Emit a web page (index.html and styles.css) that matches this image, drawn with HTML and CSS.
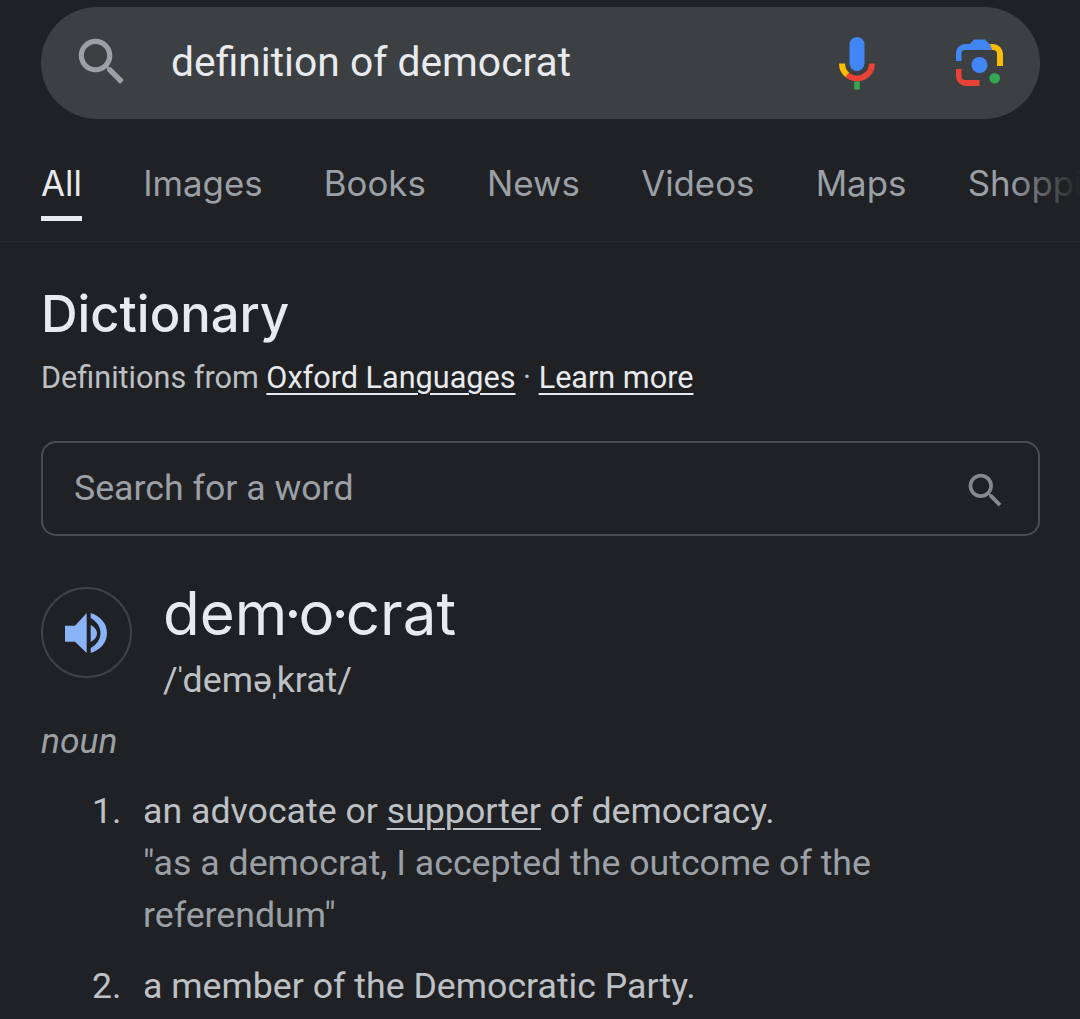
FILE: index.html
```html
<!DOCTYPE html>
<html lang="en">
<head>
  <meta charset="UTF-8">
  <title>definition of democrat</title>
  <link rel="stylesheet" href="styles.css">
</head>
<body>
  <div class="search-bar">
    <svg class="search-icon" viewBox="0 0 24 24"><path d="M15.5 14h-.79l-.28-.27A6.47 6.47 0 0 0 16 9.5 6.5 6.5 0 1 0 9.5 16c1.61 0 3.09-.59 4.23-1.57l.27.28v.79l5 4.99L20.49 19l-4.99-5zm-6 0C7.01 14 5 11.99 5 9.5S7.01 5 9.5 5 14 7.01 14 9.5 11.99 14 9.5 14z"/></svg>
    <span class="query">definition of democrat</span>
    <svg class="mic-icon" viewBox="0 0 38 53">
      <rect x="11.500" y="0" width="15" height="34" rx="7.500" fill="#4285f4"/>
      <path d="M4 26.500a15 15 0 0 0 5.360 11.500" fill="none" stroke="#fbbc04" stroke-width="6"/>
      <path d="M9.360 38A15 15 0 0 0 34 26.500" fill="none" stroke="#ea4335" stroke-width="6"/>
      <rect x="16.200" y="44.500" width="5.600" height="8" fill="#34a853"/>
    </svg>
    <svg class="lens-icon" viewBox="0 0 48 48">
      <path d="M0 22V14a9 9 0 0 1 9-9h5L18 .5h11l5 5L36 11H9a3.500 3.500 0 0 0-3.500 3.500V22z" fill="#4285f4"/>
      <path d="M34 5h3a10 10 0 0 1 10 10v12h-6V15a4 4 0 0 0-4-4h-1z" fill="#fbbc04"/>
      <path d="M0 30h5.500v7a4 4 0 0 0 4 4h14v6H10a10 10 0 0 1-10-10z" fill="#ea4335"/>
      <circle cx="23.500" cy="26" r="8" fill="#4285f4"/>
      <circle cx="38.700" cy="39.300" r="5.300" fill="#34a853"/>
    </svg>
  </div>

  <div class="tabs">
    <div class="tab active">All</div>
    <div class="tab">Images</div>
    <div class="tab">Books</div>
    <div class="tab">News</div>
    <div class="tab">Videos</div>
    <div class="tab">Maps</div>
    <div class="tab">Shopping</div>
    <div class="tabs-fade"></div>
  </div>

  <div class="dictionary">
    <h2>Dictionary</h2>
    <p class="source">Definitions from <a href="#">Oxford Languages</a> · <a href="#">Learn more</a></p>

    <div class="word-search">
      <span>Search for a word</span>
      <svg viewBox="0 0 24 24"><path d="M15.5 14h-.79l-.28-.27A6.47 6.47 0 0 0 16 9.5 6.5 6.5 0 1 0 9.5 16c1.61 0 3.09-.59 4.23-1.57l.27.28v.79l5 4.99L20.49 19l-4.99-5zm-6 0C7.01 14 5 11.99 5 9.5S7.01 5 9.5 5 14 7.01 14 9.5 11.99 14 9.5 14z"/></svg>
    </div>

    <div class="headword">
      <div class="speaker">
        <svg viewBox="0 0 42 40">
          <path d="M0 12.700H10L21.700 0V40L10 28.700H0z" fill="#8ab4f8"/>
          <path d="M25.700 12Q32 15.500 32 20.500T25.700 29z" fill="#8ab4f8"/>
          <path d="M25.700 0C35 3 42 10 42 20S35 37 25.700 40V35C31 32 35.500 27 35.500 20S31 8 25.700 5z" fill="#8ab4f8"/>
        </svg>
      </div>
      <div class="word">
        <div class="term">de<span class="tight">m·o·</span>crat</div>
        <div class="phonetic"><span class="tight">/ˈ</span>dem<span class="tight">əˌ</span>krat/</div>
      </div>
    </div>

    <div class="pos">noun</div>

    <ol class="senses">
      <li>
        <div>
          an advocate or <a href="#">supporter</a> of democracy.
          <div class="example">"as a democrat, I accepted the outcome of the referendum"</div>
        </div>
      </li>
      <li><div>a member of the Democratic Party.</div></li>
    </ol>
  </div>
</body>
</html>
```

FILE: styles.css
```css
html, body {
  height: 100%;
}

body {
  margin: 0;
  background: #202124;
  color: #e8eaed;
  font-family: Roboto, Arial, sans-serif;
  overflow: hidden;
}

a {
  color: #e8eaed;
  text-decoration: underline;
  text-decoration-thickness: 2px;
  text-underline-offset: 5px;
}

/* Search bar */
.search-bar {
  display: flex;
  align-items: center;
  height: 112px;
  margin: 7px 40px 0 41px;
  padding: 0 36px 0 30px;
  background: #3c4043;
  border-radius: 56px;
}

.search-icon {
  width: 62px;
  height: 62px;
  fill: #9aa0a6;
  flex: none;
  margin-right: 38px;
  transform: translateY(-1px);
}

.query {
  flex: 1;
  font-size: 40.8px;
  margin-top: -2px;
  color: #e8eaed;
}

.mic-icon {
  width: 38px;
  height: 53px;
  flex: none;
  margin-right: 80px;
}

.lens-icon {
  width: 48px;
  height: 48px;
  flex: none;
}

/* Tabs */
.tabs {
  position: relative;
  display: flex;
  gap: 61.3px;
  height: 123px;
  padding: 0 0 0 41px;
  box-sizing: border-box;
  border-bottom: 1px solid #27282b;
  overflow: hidden;
}

.tab {
  padding-top: 41px;
  font-family: Inter, Roboto, sans-serif;
  font-size: 34.8px;
  line-height: 46px;
  color: #9aa0a6;
  white-space: nowrap;
  flex: none;
}

.tab.active {
  color: #e8eaed;
  height: 56px;
  border-bottom: 5px solid #e8eaed;
}

.tabs-fade {
  position: absolute;
  top: 0;
  right: 0;
  bottom: 0;
  width: 70px;
  background: linear-gradient(to right, rgba(32, 33, 36, 0), #202124);
}

/* Dictionary block */
.dictionary {
  padding: 0 40px 0 41px;
}

.dictionary h2 {
  margin: 42px 0 0;
  font-family: Inter, Roboto, sans-serif;
  font-size: 50.7px;
  line-height: 60px;
  font-weight: 500;
}

.source {
  margin: 14px 0 0;
  font-size: 30.6px;
  line-height: 40px;
  color: #bdc1c6;
}

.word-search {
  display: flex;
  align-items: center;
  justify-content: space-between;
  height: 91px;
  margin-top: 43px;
  padding: 0 30px 0 31px;
  border: 2px solid #4a4d51;
  border-radius: 15px;
  font-size: 35.7px;
  color: #9aa0a6;
}

.word-search span {
  margin-top: -2px;
}

.word-search svg {
  width: 45px;
  height: 45px;
  fill: #85888c;
  transform: translateY(2px);
}

.headword {
  display: flex;
  margin-top: 51px;
}

.speaker {
  display: flex;
  align-items: center;
  justify-content: center;
  width: 87px;
  height: 87px;
  margin-right: 31px;
  border: 2px solid #3f4144;
  border-radius: 50%;
  flex: none;
}

.speaker svg {
  width: 42px;
  height: 40px;
  margin: 1px 0 0 -2px;
}

.term {
  margin-top: -9px;
  font-family: Inter, Roboto, sans-serif;
  font-size: 60px;
  line-height: 70px;
  color: #e8eaed;
}

.term .tight {
  letter-spacing: -3px;
}

.phonetic {
  margin-top: 10px;
  font-size: 35.7px;
  line-height: 44px;
  color: #bdc1c6;
}

.phonetic .tight {
  letter-spacing: -3.5px;
}

.pos {
  margin-top: 17px;
  font-size: 35.4px;
  line-height: 44px;
  font-style: italic;
  color: #9aa0a6;
}

.senses {
  counter-reset: sense;
  list-style: none;
  margin: 22px 0 0;
  padding: 0 0 0 51px;
  font-size: 35.7px;
  line-height: 52px;
  color: #bdc1c6;
}

.senses a {
  color: inherit;
}

.senses li {
  counter-increment: sense;
  display: grid;
  grid-template-columns: 51px 1fr;
  margin-bottom: 19px;
}

.senses li::before {
  content: counter(sense) ".";
}

.example {
  color: #9aa0a6;
}
```
